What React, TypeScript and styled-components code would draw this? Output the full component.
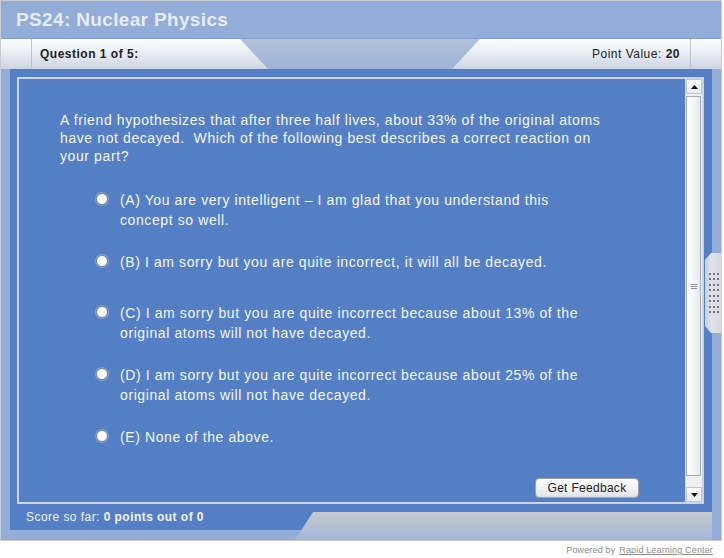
import React from "react";
import styled, { createGlobalStyle } from "styled-components";

const Global = createGlobalStyle`
  html, body { margin: 0; padding: 0; background: #ffffff; }
  body { font-family: "Liberation Sans", Arial, sans-serif; }
`;

const Page = styled.div`
  width: 724px;
  height: 558px;
  display: flex;
  flex-direction: column;
`;

const Frame = styled.div`
  position: relative;
  width: 722px;
  height: 541px;
  box-sizing: border-box;
  border: 1px solid #c7ccd5;
  background: #93acd8;
  display: flex;
  flex-direction: column;
`;

const Header = styled.div`
  height: 37px;
  display: flex;
  align-items: center;
  padding-left: 15px;
`;

const Title = styled.h1`
  margin: 0;
  font-size: 19px;
  font-weight: bold;
  color: #e7edf8;
  letter-spacing: 0.35px;
`;

const TabBar = styled.div`
  height: 31px;
  box-sizing: border-box;
  border-top: 1px solid #829fcd;
  display: flex;
  background: linear-gradient(#b2c2dc, #a6b9d7 60%, #9db2d5);
`;

const Tab = styled.div<{ $side: "left" | "right" }>`
  width: ${(p) => (p.$side === "left" ? 267 : 269)}px;
  ${(p) => (p.$side === "right" ? "margin-left: auto;" : "")}
  height: 30px;
  display: flex;
  align-items: center;
  background: linear-gradient(#fbfcfe 0%, #eef1f6 35%, #dde3ec 70%, #cbd4e3 100%);
  clip-path: ${(p) =>
    p.$side === "left"
      ? "polygon(0 0, 239px 0, 267px 100%, 0 100%)"
      : "polygon(28px 0, 100% 0, 100% 100%, 0 100%)"};
`;

const TabCap = styled.div<{ $side: "left" | "right" }>`
  width: 30px;
  height: 100%;
  ${(p) => (p.$side === "left" ? "border-right" : "border-left")}: 1px solid #b9c3d2;
`;

const TabLabel = styled.div<{ $align: "left" | "right" }>`
  flex: 1;
  font-size: 12px;
  letter-spacing: 0.5px;
  color: #222;
  text-align: ${(p) => p.$align};
  padding: ${(p) => (p.$align === "left" ? "0 0 0 8px" : "0 10px 0 0")};
  b { font-weight: bold; }
`;

const Body = styled.div`
  height: 461px;
  display: flex;
`;

const Strip = styled.div`
  width: 9px;
  background: #93acd8;
`;

const Panel = styled.div`
  width: 702px;
  background: #557fc4;
  display: flex;
  flex-direction: column;
`;

const Box = styled.div`
  margin: 8px 8px 0 7px;
  height: 427px;
  box-sizing: border-box;
  border: 2px solid #cdd4e0;
  display: flex;
`;

const Content = styled.div`
  flex: 1;
  display: flex;
  flex-direction: column;
  padding: 32px 0 0 41px;
  color: #f3f6fc;
`;

const Question = styled.p`
  margin: 0;
  max-width: 548px;
  font-size: 14px;
  line-height: 18px;
  letter-spacing: 0.6px;
`;

const Options = styled.div`
  display: flex;
  flex-direction: column;
  padding-top: 3px;
`;

const Option = styled.label<{ $top: number }>`
  display: flex;
  gap: 12px;
  margin-top: ${(p) => p.$top}px;
  padding-left: 36px;
  font-size: 14px;
  line-height: 20px;
  letter-spacing: 0.6px;
`;

const Radio = styled.span`
  flex: none;
  width: 12px;
  height: 12px;
  margin-top: 3px;
  border-radius: 50%;
  box-sizing: border-box;
  background: radial-gradient(circle at 45% 40%, #ffffff 55%, #e4e6ea 100%);
  border: 1px solid #7f8aa0;
  box-shadow: 0 0 0 1px rgba(200, 210, 230, 0.4);
`;

const OptionText = styled.span`
  width: 472px;
`;

const FeedbackButton = styled.button`
  align-self: flex-end;
  margin: 31px 46px 0 0;
  width: 104px;
  height: 20px;
  box-sizing: border-box;
  border: 1px solid #98a0ac;
  border-radius: 4px;
  background: linear-gradient(#ffffff, #f1f2f4 55%, #dfe2e7);
  font-family: "Liberation Sans", Arial, sans-serif;
  font-size: 12px;
  letter-spacing: 0.3px;
  color: #222;
  padding: 0;
`;

const Scrollbar = styled.div`
  width: 16px;
  display: flex;
  flex-direction: column;
  background: #eef0f3;
  border-left: 1px solid #d6dae0;
`;

const ScrollButton = styled.div`
  height: 15px;
  box-sizing: border-box;
  border: 1px solid #c1c6ce;
  background: linear-gradient(#ffffff, #e9ebef);
  display: flex;
  align-items: center;
  justify-content: center;
`;

const Thumb = styled.div`
  height: 380px;
  margin: 2px 1px 11px 0;
  box-sizing: border-box;
  border: 1px solid #a9afb8;
  background: linear-gradient(90deg, #ffffff, #f3f4f6 60%, #e2e5ea);
  display: flex;
  align-items: center;
  justify-content: center;
`;

const Grip = styled.div`
  width: 6px;
  height: 5px;
  background: repeating-linear-gradient(#8d939c 0 1px, transparent 1px 2px);
`;

const ScoreRow = styled.div`
  height: 26px;
  display: flex;
  align-items: center;
  padding-left: 16px;
  font-size: 12px;
  letter-spacing: 0.45px;
  color: #eef2fa;
  b { font-weight: bold; }
`;

const BottomTab = styled.div`
  margin-left: auto;
  align-self: flex-end;
  width: 417px;
  height: 28px;
  margin-bottom: -10px;
  background: linear-gradient(#c6c9d1, #b7c0d2 45%, #a2b7da);
  clip-path: polygon(18px 0, 100% 0, 100% 100%, 0 100%);
`;

const BottomStrip = styled.div`
  height: 10px;
`;

const Handle = styled.div`
  position: absolute;
  top: 252px;
  right: -1px;
  width: 17px;
  height: 80px;
  background: linear-gradient(90deg, #c9ced8, #e0e3e9 40%, #d3d8e0);
  clip-path: polygon(6px 0, 100% 0, 100% 100%, 6px 100%, 0 calc(100% - 7px), 0 7px);
  display: grid;
  grid-template-columns: repeat(3, 2px);
  grid-auto-rows: 2px;
  column-gap: 2px;
  row-gap: 3.5px;
  align-content: center;
  padding-left: 4px;
  box-sizing: border-box;
`;

const Dot = styled.span`
  width: 2px;
  height: 2px;
  background: #6f7684;
`;

const Footer = styled.div`
  flex: 1;
  display: flex;
  align-items: center;
  justify-content: flex-end;
  padding-right: 11px;
  font-size: 9px;
  letter-spacing: 0.15px;
  color: #8c8c8c;
  a { color: #8c8c8c; text-decoration: underline; margin-left: 4px; }
`;

const Arrow = ({ up }: { up?: boolean }) => (
  <svg width="7" height="4" viewBox="0 0 7 4">
    <polygon points={up ? "3.5,0 7,4 0,4" : "0,0 7,0 3.5,4"} fill="#111" />
  </svg>
);

const options = [
  { top: 22, text: "(A) You are very intelligent \u2013 I am glad that you understand this concept so well." },
  { top: 22, text: "(B) I am sorry but you are quite incorrect, it will all be decayed." },
  { top: 31, text: "(C) I am sorry but you are quite incorrect because about 13% of the original atoms will not have decayed." },
  { top: 22, text: "(D) I am sorry but you are quite incorrect because about 25% of the original atoms will not have decayed." },
  { top: 22, text: "(E) None of the above." },
];

export default function App() {
  return (
    <Page>
      <Global />
      <Frame>
        <Header>
          <Title>PS24: Nuclear Physics</Title>
        </Header>
        <TabBar>
          <Tab $side="left">
            <TabCap $side="left" />
            <TabLabel $align="left">
              <b>Question 1 of 5:</b>
            </TabLabel>
          </Tab>
          <Tab $side="right">
            <TabLabel $align="right">
              Point Value: <b>20</b>
            </TabLabel>
            <TabCap $side="right" />
          </Tab>
        </TabBar>
        <Body>
          <Strip />
          <Panel>
            <Box>
              <Content>
                <Question>
                  A friend hypothesizes that after three half lives, about 33% of the original atoms have not decayed.{"\u00a0"} Which of the following best describes a correct reaction on your part?
                </Question>
                <Options>
                  {options.map((o, i) => (
                    <Option key={i} $top={o.top}>
                      <Radio />
                      <OptionText>{o.text}</OptionText>
                    </Option>
                  ))}
                </Options>
                <FeedbackButton>Get Feedback</FeedbackButton>
              </Content>
              <Scrollbar>
                <ScrollButton>
                  <Arrow up />
                </ScrollButton>
                <Thumb>
                  <Grip />
                </Thumb>
                <ScrollButton>
                  <Arrow />
                </ScrollButton>
              </Scrollbar>
            </Box>
            <ScoreRow>
              Score so far:&nbsp;<b>0 points out of 0</b>
              <BottomTab />
            </ScoreRow>
          </Panel>
          <Strip />
        </Body>
        <BottomStrip />
        <Handle>
          {Array.from({ length: 24 }).map((_, i) => (
            <Dot key={i} />
          ))}
        </Handle>
      </Frame>
      <Footer>
        Powered by <a>Rapid Learning Center</a>
      </Footer>
    </Page>
  );
}
